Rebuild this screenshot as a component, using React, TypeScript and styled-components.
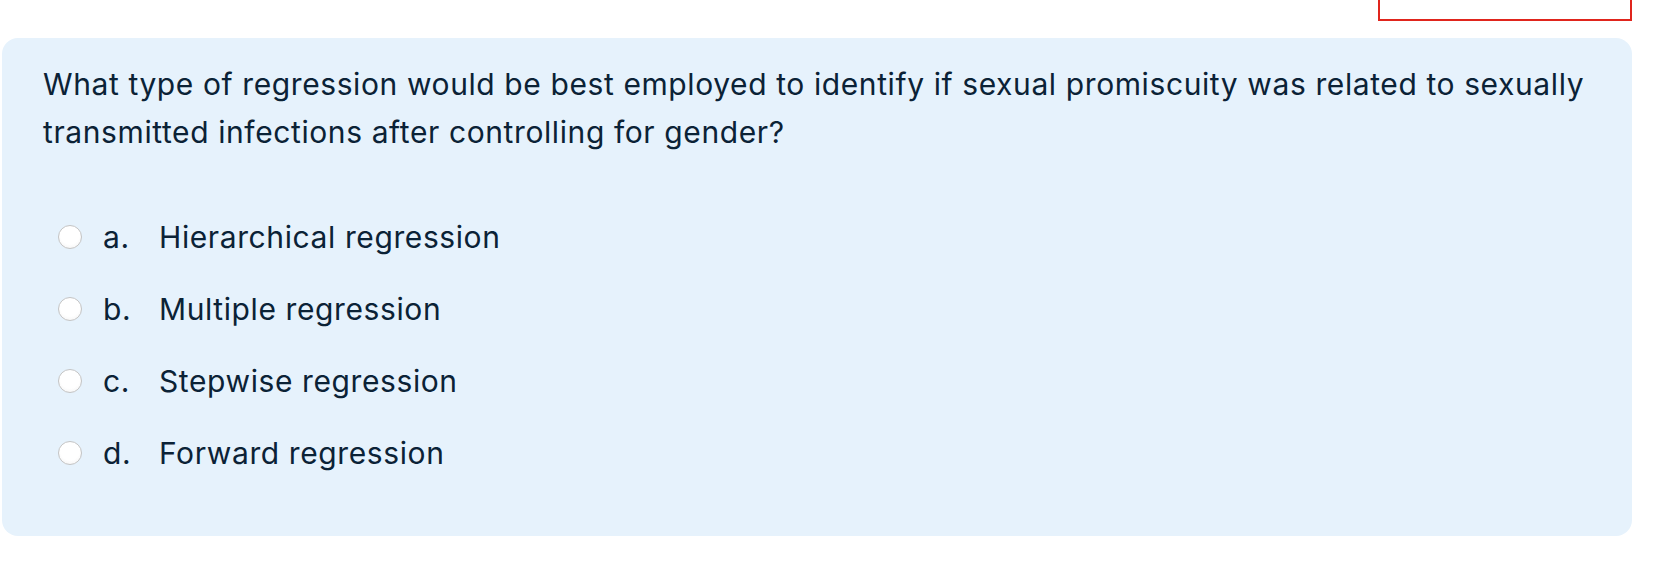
import React from "react";
import styled, { createGlobalStyle } from "styled-components";

const Global = createGlobalStyle`
  html, body { margin: 0; padding: 0; background: #ffffff; }
  body { font-family: Inter, "Noto Sans", sans-serif; color: #0b2236; }
`;

const Page = styled.div`
  display: flex;
  flex-direction: column;
  padding: 0 24px 0 2px;
  width: 1656px;
  box-sizing: border-box;
`;

const TopBar = styled.div`
  display: flex;
  justify-content: flex-end;
  height: 21px;
  margin-bottom: 17px;
`;

const Marker = styled.div`
  width: 254px;
  height: 21px;
  box-sizing: border-box;
  border: 2px solid #e0251d;
  border-top: none;
`;

const Panel = styled.section`
  background: #e6f2fc;
  border-radius: 16px;
  padding: 22px 41px 48px 41px;
  height: 498px;
  box-sizing: border-box;
`;

const Question = styled.p`
  margin: 0;
  font-size: 30px;
  line-height: 48px;
  letter-spacing: 0.6px;
`;

const Options = styled.div`
  display: flex;
  flex-direction: column;
  margin-top: 45px;
  padding-left: 15px;
`;

const Option = styled.label`
  display: flex;
  align-items: center;
  height: 72px;
  font-size: 30px;
  letter-spacing: 0.6px;
`;

const Radio = styled.span`
  width: 24px;
  height: 24px;
  border-radius: 50%;
  border: 1px solid #c4c4c4;
  background: radial-gradient(circle at 50% 40%, #ffffff 55%, #efefef 100%);
  box-sizing: border-box;
  flex: none;
  margin-right: 21px;
`;

const Letter = styled.span`
  width: 56px;
  flex: none;
`;

const Text = styled.span``;

const options = [
  ["a.", "Hierarchical regression"],
  ["b.", "Multiple regression"],
  ["c.", "Stepwise regression"],
  ["d.", "Forward regression"],
];

export default function App() {
  return (
    <>
      <Global />
      <Page>
        <TopBar>
          <Marker />
        </TopBar>
        <Panel>
          <Question>
            What type of regression would be best employed to identify if sexual promiscuity was related to sexually
            transmitted infections after controlling for gender?
          </Question>
          <Options>
            {options.map(([l, t]) => (
              <Option key={l}>
                <Radio />
                <Letter>{l}</Letter>
                <Text>{t}</Text>
              </Option>
            ))}
          </Options>
        </Panel>
      </Page>
    </>
  );
}
